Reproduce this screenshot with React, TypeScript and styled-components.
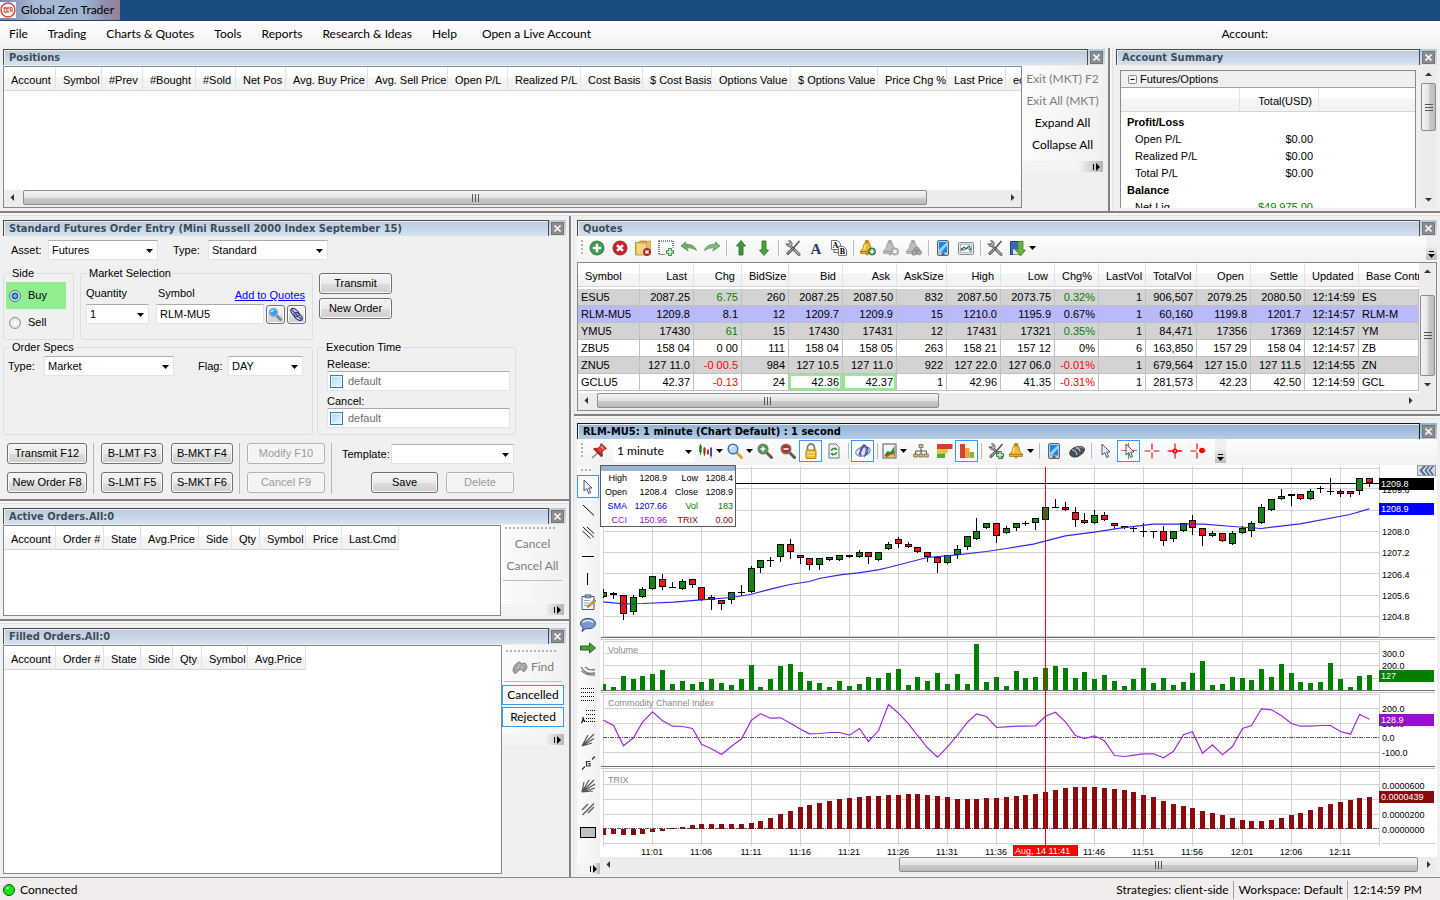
import React from "react";
import styled, { createGlobalStyle, css } from "styled-components";

const SANS = `"Liberation Sans", Arial, sans-serif`;
const UI = `Lato, "Segoe UI", sans-serif`;
const TITLE = `"DejaVu Sans Condensed", Tahoma, "DejaVu Sans", sans-serif`;

const GlobalStyle = createGlobalStyle`
  *, *::before, *::after { box-sizing: border-box; }
  body { margin: 0; background: #f0f0f0; color: #000; font: 11px/13px ${SANS}; }
  button, input, select { font: inherit; color: inherit; margin: 0; }
  svg { display: block; flex: none; }
`;

/* ---------- shell ---------- */

const Shell = styled.div`
  display: grid;
  grid-template-rows: 21px 27px 163px 5px 1fr 24px;
  grid-template-columns: minmax(0, 1fr);
  min-height: 100vh;
  background: #f0f0f0;
  overflow: hidden;
`;

const TitleBar = styled.header`
  display: flex;
  background: #1a4b80;
  border-bottom: 1px solid #24466e;
`;

const AppName = styled.h1`
  display: flex;
  align-items: center;
  gap: 5px;
  width: 120px;
  margin: 0;
  font: 12px/20px ${UI};
  white-space: nowrap;
  background: linear-gradient(90deg, #7288ad, #a9bbd6 30%, #9fb4d2 70%, #8c8fae 88%, #9a7e93);
`;

const MenuBar = styled.nav`
  display: flex;
  align-items: center;
  gap: 20px;
  padding: 0 172px 2px 9px;
  background: linear-gradient(#fdfdfd, #f2f2f2);
  font: 12px/16px ${UI};
  white-space: nowrap;
`;

const MenuItem = styled.button<{ $gap?: boolean }>`
  padding: 0;
  border: 0;
  background: none;
  margin-left: ${(p) => (p.$gap ? "5px" : "0")};
`;

const AccountLabel = styled.span`
  margin-left: auto;
`;

const TopRow = styled.div`
  display: grid;
  grid-template-columns: minmax(0, 1fr) 5px 327px;
  min-height: 0;
`;

const MainRow = styled.div`
  display: grid;
  grid-template-columns: 569px 5px minmax(0, 1fr);
  min-height: 0;
`;

const HSplit = styled.div`
  flex: none;
  height: 5px;
  background: #f6f6f6;
  border-top: 2px solid #828282;
  border-bottom: 1px solid #e2e2e2;
`;

const VSplit = styled.div`
  background: #f6f6f6;
  border-left: 2px solid #828282;
  border-right: 1px solid #e2e2e2;
`;

const Column = styled.div`
  display: flex;
  flex-direction: column;
  min-width: 0;
`;

const Panel = styled.section<{ $grow?: boolean; $h?: number; $top?: number }>`
  display: flex;
  flex-direction: column;
  min-width: 0;
  flex: ${(p) => (p.$grow ? "1" : "none")};
  ${(p) => p.$h && css`height: ${p.$h}px;`}
  padding: ${(p) => p.$top ?? 4}px 3px 3px;
`;

const Caption = styled.div<{ $active?: boolean }>`
  display: flex;
  flex: none;
  height: 16px;
  background: ${(p) => (p.$active ? "linear-gradient(#92b0d0, #b4cde8)" : "linear-gradient(#b7c8d9, #d6e2f0)")};
`;

const CaptionText = styled.h2<{ $active?: boolean }>`
  flex: 1;
  margin: 0;
  padding-left: 5px;
  border: 1px solid ${(p) => (p.$active ? "#1c1c1c" : "#4a4a4a")};
  border-bottom: 0;
  box-shadow: inset 1px 1px 0 #eaf0f7;
  font: bold 11px/15px ${TITLE};
  color: ${(p) => (p.$active ? "#000" : "#3e4b57")};
  white-space: nowrap;
  overflow: hidden;
`;

const CloseButton = styled.button`
  display: grid;
  place-items: center;
  width: 17px;
  height: 16px;
  padding: 0;
  border: 0;
  background: none;
`;

const Body = styled.div`
  display: flex;
  flex: 1;
  min-height: 0;
  margin-top: 1px;
`;

const Well = styled.div`
  display: flex;
  flex-direction: column;
  flex: 1;
  min-width: 0;
  border: 1px solid #828790;
  background: #fff;
  overflow: hidden;
`;

/* ---------- scroll bars ---------- */

const HBar = styled.div`
  display: flex;
  flex: none;
  align-items: flex-start;
  height: 17px;
  background: #ececec;
`;

const ArrowButton = styled.button<{ $tall?: boolean }>`
  display: grid;
  place-items: center;
  flex: none;
  width: 19px;
  height: ${(p) => (p.$tall ? "17px" : "15px")};
  padding: 0;
  border: 0;
  background: transparent;
`;

const thumb = css`
  display: grid;
  place-items: center;
  border: 1px solid #8d8d8d;
  border-radius: 2px;
`;

const HThumb = styled.div<{ $flex: number }>`
  ${thumb}
  flex: ${(p) => p.$flex};
  height: 15px;
  background: linear-gradient(#f4f4f4, #e4e4e4 50%, #cdcdcf 51%, #bcbcc0);
`;

const Track = styled.div<{ $flex: number }>`
  flex: ${(p) => p.$flex};
`;

const Corner = styled.div`
  flex: none;
  width: 17px;
`;

const VBar = styled.div`
  display: flex;
  flex: none;
  flex-direction: column;
  align-items: center;
  width: 17px;
  background: #ececec;
`;

const VThumb = styled.div<{ $flex: number }>`
  ${thumb}
  flex: ${(p) => p.$flex};
  width: 15px;
  background: linear-gradient(90deg, #f4f4f4, #e4e4e4 50%, #cdcdcf 51%, #bcbcc0);
`;

/* ---------- tables ---------- */

const Grid = styled.table`
  width: 100%;
  table-layout: fixed;
  border-collapse: separate;
  border-spacing: 0;
`;

const Th = styled.th<{ $right?: boolean }>`
  height: 24px;
  padding: 4px 6px 0 7px;
  font-weight: normal;
  text-align: ${(p) => (p.$right ? "right" : "left")};
  white-space: nowrap;
  overflow: hidden;
  background: linear-gradient(#fff 45%, #f4f5f6 46%, #f1f2f4);
  border-right: 1px solid #e0e3e6;
  border-bottom: 1px solid #d5d5d5;
  &:last-child { padding-right: 0; border-right: 0; }
`;

const QuoteRow = styled.tr<{ $bg: string }>`
  background: ${(p) => p.$bg};
`;

const Td = styled.td<{ $color?: string; $left?: boolean; $flash?: boolean }>`
  height: 17px;
  padding: 0 3px;
  font-size: 11px;
  line-height: 15px;
  text-align: ${(p) => (p.$left ? "left" : "right")};
  white-space: nowrap;
  overflow: hidden;
  color: ${(p) => p.$color ?? "#000"};
  border-right: 1px solid #c0c0c0;
  border-bottom: 1px solid #c0c0c0;
  ${(p) => p.$flash && css`box-shadow: inset 0 0 0 2px #90ee90;`}
`;

/* ---------- tool strips ---------- */

const SideStrip = styled.div<{ $w: number; $top?: number }>`
  display: flex;
  flex-direction: column;
  align-self: flex-start;
  flex: none;
  width: ${(p) => p.$w}px;
  margin-right: 2px;
  padding-top: ${(p) => p.$top ?? 0}px;
  font: 12px/16px ${UI};
  background: linear-gradient(90deg, #fbfbfb, #f1f1f1);
`;

const StripButton = styled.button<{ $boxed?: boolean }>`
  display: flex;
  align-items: center;
  justify-content: center;
  gap: 3px;
  width: 100%;
  height: ${(p) => (p.$boxed ? "20px" : "22px")};
  margin-bottom: ${(p) => (p.$boxed ? "2px" : "0")};
  padding: 0;
  white-space: nowrap;
  border: ${(p) => (p.$boxed ? "1px solid #3399ff" : "0")};
  background: ${(p) => (p.$boxed ? "#fbfbfb" : "none")};
  &:disabled { color: #7d7d7d; }
`;

const StripRule = styled.hr`
  width: calc(100% - 4px);
  margin: 3px 2px;
  border: 0;
  border-top: 1px solid #bdbdbd;
`;

const Grip = styled.div<{ $vertical?: boolean }>`
  flex: none;
  ${(p) =>
    p.$vertical
      ? css`width: 2px; height: 16px; margin-right: 2px; background: repeating-linear-gradient(#b4b4b4 0 2px, transparent 2px 4px);`
      : css`width: 52px; height: 2px; margin: 2px auto 4px 4px; background: repeating-linear-gradient(90deg, #b4b4b4 0 2px, transparent 2px 4px);`}
`;

const StripEnd = styled.div<{ $gap?: number }>`
  display: flex;
  justify-content: flex-end;
  margin-top: ${(p) => p.$gap ?? 0}px;
  height: 11px;
  background: linear-gradient(90deg, #f4f4f4 70%, #b5b5b5);
`;

const ToolBar = styled.div`
  display: flex;
  align-items: center;
  flex: none;
  height: 26px;
  padding: 0 0 2px 4px;
  background: linear-gradient(#fdfdfd, #f2f2f2);
`;

const Tool = styled.button<{ $on?: boolean; $w?: number }>`
  display: grid;
  place-items: center;
  flex: none;
  width: ${(p) => p.$w ?? 23}px;
  height: 22px;
  padding: 0;
  border: ${(p) => (p.$on ? "1px solid #3399ff" : "0")};
  background: ${(p) => (p.$on ? "#fdfdfd" : "none")};
`;

const ToolRule = styled.span`
  flex: none;
  width: 1px;
  height: 16px;
  margin: 0 2px 0 3px;
  background: #bdbdbd;
`;

const ToolEnd = styled.button<{ $push?: boolean }>`
  display: grid;
  place-items: end center;
  flex: none;
  width: 11px;
  height: 24px;
  padding: 0 0 2px;
  border: 0;
  margin-left: ${(p) => (p.$push ? "auto" : "6px")};
  background: linear-gradient(#f0f0f0 40%, #bcbcbc);
`;

/* ---------- order form ---------- */

const Form = styled.form`
  display: flex;
  flex-direction: column;
  padding-top: 3px;
  height: 259px;
`;

const Line = styled.div<{ $mt?: number; $pl?: number; $gap?: number }>`
  display: flex;
  align-items: flex-start;
  margin-top: ${(p) => p.$mt ?? 0}px;
  padding-left: ${(p) => p.$pl ?? 0}px;
  gap: ${(p) => p.$gap ?? 0}px;
`;

const Label = styled.label<{ $w?: number; $ml?: number }>`
  flex: none;
  width: ${(p) => (p.$w ? `${p.$w}px` : "auto")};
  margin-left: ${(p) => p.$ml ?? 0}px;
  line-height: 20px;
  white-space: nowrap;
`;

const PickWrap = styled.span<{ $w: number }>`
  position: relative;
  flex: none;
  width: ${(p) => p.$w}px;
  height: 20px;
  svg { position: absolute; right: 5px; top: 9px; pointer-events: none; }
`;

const field = css`
  height: 20px;
  padding: 0 3px;
  border: 1px solid #e2e3ea;
  border-top-color: #abadb3;
  border-radius: 0;
  background: #fff;
  outline: none;
`;

const Pick = styled.select`
  ${field}
  width: 100%;
  appearance: none;
`;

const TextBox = styled.input`
  ${field}
  width: 108px;
`;

const Group = styled.fieldset<{ $w: number; $h: number }>`
  flex: none;
  width: ${(p) => p.$w}px;
  height: ${(p) => p.$h}px;
  min-width: 0;
  margin: 0;
  padding: 0;
  border: 1px solid #d5dfe5;
  border-radius: 3px;
`;

const GroupBody = styled.div<{ $pad: string }>`
  padding: ${(p) => p.$pad};
`;

const Legend = styled.legend`
  margin-left: 6px;
  padding: 0 2px;
  line-height: 12px;
`;

const SideOption = styled.label<{ $on?: boolean }>`
  display: flex;
  align-items: center;
  gap: 7px;
  width: 60px;
  height: 27px;
  padding-left: 3px;
  background: ${(p) => (p.$on ? "#90ee90" : "transparent")};
`;

const Radio = styled.input`
  appearance: none;
  width: 12px;
  height: 12px;
  border: 1px solid #8e8f8f;
  border-radius: 50%;
  background: radial-gradient(#fff, #d8d8d8);
  &:checked {
    border-color: #4a6a80;
    background: radial-gradient(circle, #5cc2ec 0 1px, #0f4d7c 3px, #e8f0f6 4px);
  }
`;

const Check = styled.input`
  appearance: none;
  flex: none;
  width: 13px;
  height: 13px;
  border: 1px solid #3f7da6;
  background: linear-gradient(135deg, #a9dcf7, #e6f6fe);
  box-shadow: inset 0 0 0 1px #e8f6fd;
`;

const DateField = styled.label`
  ${field}
  display: flex;
  align-items: center;
  gap: 5px;
  width: 183px;
  padding: 0 2px;
  color: #6d6d6d;
`;

const Small = styled.span<{ $mt?: number }>`
  display: block;
  margin-top: ${(p) => p.$mt ?? 0}px;
  line-height: 14px;
`;

const Push = styled.button<{ $w: number }>`
  display: grid;
  place-items: center;
  flex: none;
  width: ${(p) => p.$w}px;
  height: 21px;
  padding: 0;
  border: 1px solid #707070;
  border-radius: 3px;
  white-space: nowrap;
  background: linear-gradient(#f3f3f3, #ebebeb 50%, #dddddd 51%, #cfcfcf);
  box-shadow: inset 0 0 0 1px #fafafa;
  &:disabled {
    color: #9a9a9a;
    border-color: #adb2b5;
    background: #f4f4f4;
  }
`;

const Square = styled(Push)`
  height: 19px;
  margin: 1px 0 0 2px;
`;

const Stack = styled.div<{ $gap: number; $mt?: number }>`
  display: flex;
  flex-direction: column;
  align-items: flex-end;
  gap: ${(p) => p.$gap}px;
  margin-top: ${(p) => p.$mt ?? 0}px;
`;

const VRule = styled.span`
  width: 1px;
  height: 51px;
  margin: 0 7px 0 6px;
  background: #b8b8b8;
`;

const Link = styled.a`
  margin-left: auto;
  color: #0000ff;
  line-height: 17px;
`;

/* ---------- account summary ---------- */

const Summary = styled.div`
  flex: 1;
  min-width: 0;
  height: 138px;
  margin: 4px 4px 0;
  border: 1px solid #8a8a8a;
  border-bottom: 0;
  background: #fff;
  overflow: hidden;
`;

const SummaryHead = styled.h3`
  display: flex;
  align-items: center;
  gap: 3px;
  height: 17px;
  margin: 0;
  padding-left: 7px;
  font: 11px/13px ${SANS};
  background: #f0f0f0;
  border-bottom: 1px solid #a0a0a0;
`;

const MoneyCell = styled.td<{ $bold?: boolean; $right?: boolean; $green?: boolean }>`
  height: 17px;
  padding: ${(p) => (p.$right ? "0 6px 0 0" : p.$bold ? "0 0 0 6px" : "0 0 0 14px")};
  font-weight: ${(p) => (p.$bold ? "bold" : "normal")};
  text-align: ${(p) => (p.$right ? "right" : "left")};
  color: ${(p) => (p.$green ? "#008000" : "#000")};
`;

/* ---------- chart ---------- */

const ChartRow = styled.div`
  display: flex;
  flex: 1;
  min-height: 0;
`;

const Palette = styled.div`
  display: flex;
  flex-direction: column;
  flex: none;
  width: 23px;
  padding-top: 4px;
  background: linear-gradient(90deg, #fbfbfb, #f1f1f1);
`;

const PaletteGrip = styled.div`
  width: 10px;
  height: 2px;
  margin: 0 0 4px 4px;
  background: repeating-linear-gradient(90deg, #b4b4b4 0 2px, transparent 2px 4px);
`;

const PaletteEnd = styled(StripEnd)`
  margin-top: auto;
`;

const ChartArea = styled.div`
  position: relative;
  display: flex;
  flex-direction: column;
  flex: 1;
  min-width: 0;
  background: #fff;
`;

const ChartSvg = styled.svg`
  width: 100%;
  height: auto;
  font: 9px ${SANS};
`;

const DataWindow = styled.div`
  position: absolute;
  left: 0;
  top: 0;
  width: 136px;
  height: 62px;
  border: 1px solid #5a5a5a;
  background: #fff;
  &::before { content: ""; display: block; height: 5px; background: #99b4d1; }
`;

const DataTable = styled.table`
  width: 132px;
  border-spacing: 0;
  table-layout: fixed;
  font: 9px/14px ${SANS};
`;

const DataCell = styled.td<{ $c?: string }>`
  padding: 0;
  text-align: right;
  color: ${(p) => p.$c ?? "#000"};
`;

const Collapse = styled.button`
  position: absolute;
  right: 1px;
  top: 0;
  width: 19px;
  height: 11px;
  padding: 0;
  border: 1px solid #9a9a9a;
  background: #d8d8d8;
`;

const IntervalWrap = styled(PickWrap)`
  height: 22px;
  svg { top: 10px; right: 3px; }
`;

const Interval = styled.select`
  appearance: none;
  width: 100%;
  height: 22px;
  padding: 0 0 0 4px;
  border: 0;
  background: #fff;
  font: 12px/16px ${UI};
`;

/* ---------- status bar ---------- */

const StatusBar = styled.footer`
  display: flex;
  align-items: center;
  padding: 0 18px 0 3px;
  border-top: 1px solid #8c8c8c;
  background: #f1edec;
  font: 12px/18px ${UI};
  white-space: nowrap;
`;

const StatusText = styled.span<{ $first?: boolean; $rule?: boolean }>`
  margin-left: ${(p) => (p.$first ? "auto" : "4px")};
  padding-left: ${(p) => (p.$rule ? "5px" : "0")};
  border-left: ${(p) => (p.$rule ? "1px solid #a0a0a0" : "0")};
`;

const Connected = styled.span`
  margin-left: 5px;
`;

/* ---------- icons ---------- */

const Ic = ({ children, w = 16, h = 16 }: { children: React.ReactNode; w?: number; h?: number }) => (
  <svg width={w} height={h} viewBox={`0 0 ${w} ${h}`} aria-hidden="true">{children}</svg>
);

const Caret = () => <Ic w={7} h={4}><path d="M0 0h7L3.500 4z" /></Ic>;

const CloseX = () => (
  <Ic w={13} h={13}>
    <rect x=".5" y=".5" width="12" height="12" fill="#8d8d8d" stroke="#747474" />
    <path d="M3.500 3.500l6 6M9.500 3.500l-6 6" stroke="#fff" strokeWidth="1.600" />
  </Ic>
);

const EndMark = () => (
  <Ic w={14} h={11}><path d="M4.500 3v6" stroke="#000" /><path d="M7 2v8l4-4z" /></Ic>
);

const DownMark = () => <Ic w={7} h={8}><path d="M1 1.500h5" stroke="#000" /><path d="M0 4h7L3.500 8z" /></Ic>;

const Wrench = () => (
  <>
    <path d="M4 4.500L14 14.500" stroke="#555a5e" strokeWidth="3" strokeLinecap="round" />
    <path d="M4 4.500L14 14.500" stroke="#a9aeb2" strokeWidth="1.400" strokeLinecap="round" />
    <path d="M1 3.500c.300 2.500 2.500 3.500 4.500 2.500l1.500-1.500C7.500 2 6 .500 3.500.800L5.300 2.600 3 4.800z" fill="#b8bcc0" stroke="#555a5e" strokeWidth=".9" />
    <path d="M14.500 1L8 8.500" stroke="#4c5154" strokeWidth="1.500" />
    <path d="M7.500 7.500l-6 5.500 1.500 2L9 9z" fill="#8d9296" stroke="#444" strokeWidth=".8" />
  </>
);

const Bell = ({ gray }: { gray?: boolean }) => {
  const f = gray ? "#bdbdbd" : "#f0b62c";
  const s = gray ? "#9b9b9b" : "#a8700e";
  return (
    <g stroke={s} strokeWidth=".8" fill={f}>
      <path d="M5.300 3V1.500a1.700 1.300 0 0 1 3.400 0V3z" fill={gray ? "#aaa" : "#c88a1c"} />
      <path d="M7 2.300c3 0 3.300 3 3.800 5.200.400 2 2.700 2.500 2.700 4H.500c0-1.500 2.300-2 2.700-4C3.700 5.300 4 2.300 7 2.300z" />
      <path d="M.500 11.500h13v1.900H.500z" />
      <path d="M5.500 13.500h3l-1.500 2z" />
      {!gray && <path d="M5.500 4.500c-.800 1.500-1 3-1.500 5" stroke="#ffe9a0" strokeWidth="1.400" fill="none" />}
    </g>
  );
};

const Plus = ({ x, y, r = 4 }: { x: number; y: number; r?: number }) => (
  <g>
    <circle cx={x} cy={y} r={r} fill="#3f9b52" stroke="#206a30" strokeWidth=".8" />
    <path d={`M${x - r * 0.6} ${y}h${r * 1.2}M${x} ${y - r * 0.6}v${r * 1.2}`} stroke="#fff" strokeWidth={r > 5 ? 2.4 : 1.5} />
  </g>
);

const Cross = ({ x, y, r = 4, gray }: { x: number; y: number; r?: number; gray?: boolean }) => {
  const d = r * 0.42;
  return (
    <g>
      <circle cx={x} cy={y} r={r} fill={gray ? "#b4b4b4" : "#c9252b"} stroke={gray ? "#999" : "#8a1216"} strokeWidth=".8" />
      <path d={`M${x - d} ${y - d}l${2 * d} ${2 * d}M${x + d} ${y - d}l${-2 * d} ${2 * d}`} stroke="#fff" strokeWidth={r > 5 ? 2.6 : 1.4} />
    </g>
  );
};

const Lens = ({ sign }: { sign?: "plus" | "minus" }) => {
  const c = sign === "plus" ? "#4c9a4c" : sign === "minus" ? "#c62828" : "#b9d8f2";
  return (
    <Ic>
      <path d="M10 10l4.500 4.500" stroke={sign ? "#5a5a5a" : "#d9a441"} strokeWidth="3" strokeLinecap="round" />
      <circle cx="6" cy="6" r="4.800" fill={c} stroke={sign ? "#6f7f74" : "#3f6fae"} strokeWidth="1.500" />
      {!sign && <path d="M3.500 5.500a3 3 0 0 1 3-2.500" stroke="#fff" strokeWidth="1.400" fill="none" />}
      {sign && <path d="M3.500 6h5" stroke="#fff" strokeWidth="1.600" />}
      {sign === "plus" && <path d="M6 3.500v5" stroke="#fff" strokeWidth="1.600" />}
    </Ic>
  );
};

const Phone = () => (
  <Ic>
    <rect x="2.500" y=".500" width="11" height="15" rx="1.500" fill="#c3ccd6" stroke="#59636e" />
    <rect x="4" y="2" width="8" height="10.500" fill="#1487e8" />
    <path d="M4 9.500L12 2v3.500L6 12.500H4z" fill="#8ed2ff" />
    <path d="M6.500 14h3" stroke="#333" strokeWidth="1.400" />
  </Ic>
);

const Pointer = ({ x = 0 }: { x?: number }) => (
  <path d={`M${x + 4} 1v11l2.700-2.400 2 4.900 2-.900-2-4.600h3.300z`} fill="#eef2f7" stroke="#44546c" strokeWidth="1" />
);

const RedCross = ({ cx = 8, dot }: { cx?: number; dot?: "center" | "right" }) => (
  <Ic>
    <path d={`M${cx} .5v6M${cx} 9.500v6M.5 8h6M9.500 8h6`} stroke="#ff0000" strokeWidth="1.200" />
    {dot === "center" && <><path d="M2 8h12" stroke="#f00" /><circle cx="8" cy="8" r="2.600" fill="#f00" /><circle cx="8" cy="8" r=".8" fill="#fff" /></>}
    {dot === "right" && <circle cx="12" cy="7.500" r="2.800" fill="#f00" />}
  </Ic>
);

const quoteTools: Record<string, React.ReactNode> = {
  "Add symbol": <Ic><Plus x={8} y={8} r={7} /></Ic>,
  "Delete symbol": <Ic><Cross x={8} y={8} r={7} /></Ic>,
  "Clear page": (
    <Ic>
      <path d="M.500 2.500h3L5 1h6v14H.500z" fill="#d9aa45" stroke="#a87a1c" strokeWidth=".7" />
      <path d="M1.500 3.500h10v11h-10z" fill="#f3d484" />
      <path d="M11.500 1h4v13h-4z" fill="#e9bf62" stroke="#b98a2a" strokeWidth=".6" />
      <Cross x={12} y={12} r={3.6} />
    </Ic>
  ),
  "Insert row": (
    <Ic>
      <rect x="1" y="1" width="14" height="13.500" fill="none" stroke="#222" strokeWidth="1.200" strokeDasharray="1 1" />
      <rect x="7.500" y="7.500" width="8.500" height="8.500" fill="#fbfbfb" />
      <path d="M12 8v8M8 12h8" stroke="#2c8a3d" strokeWidth="3.600" />
      <path d="M12 9v6M9 12h6" stroke="#e9f8ea" strokeWidth="1.600" />
    </Ic>
  ),
  Undo: <Ic><path d="M0 6l4.500-4V4.300C10 4 14 6 15.500 10.500 12.500 8 8.500 7.600 5.500 8l1.800 3z" fill="#6db56d" stroke="#3c8a3f" strokeWidth=".7" /></Ic>,
  Redo: <Ic><path d="M16 6l-4.500-4V4.300C6 4 2 6 .500 10.500 3.500 8 7.500 7.600 10.500 8l-1.800 3z" fill="#7dba7d" stroke="#3c8a3f" strokeWidth=".7" /></Ic>,
  "Move up": <Ic><path d="M8 .5l4.500 5.500H10v9H6V6H3.500z" fill="#3f9a35" stroke="#226a1c" strokeWidth=".8" /></Ic>,
  "Move down": <Ic><path d="M8 15.500L3.500 10H6V1h4v9h2.500z" fill="#4ba53f" stroke="#226a1c" strokeWidth=".8" /></Ic>,
  Settings: <Ic><Wrench /></Ic>,
  Font: <Ic><text x="8" y="13.500" textAnchor="middle" fontFamily="Liberation Serif" fontWeight="bold" fontSize="15" fill="#20406c">A</text></Ic>,
  "Text size": (
    <Ic>
      <path d="M.500.500h6l3 3v6h-9z" fill="#fff" stroke="#777" />
      <text x="4.500" y="8" textAnchor="middle" fontFamily="Liberation Serif" fontWeight="bold" fontSize="8">A</text>
      <path d="M7.500 6.500h5l3 3v6h-8z" fill="#fff" stroke="#777" />
      <text x="11.500" y="14" textAnchor="middle" fontFamily="Liberation Serif" fontWeight="bold" fontSize="8">B</text>
      <path d="M3 10v2.500h4" stroke="#666" fill="none" />
    </Ic>
  ),
  "Add alert": <Ic><Bell /><Plus x={12} y={11.5} r={3.6} /></Ic>,
  "Remove alert": <Ic><Bell gray /><Cross x={12} y={11.5} r={3.6} gray /></Ic>,
  "Find alert": <Ic><Bell gray /><g fill="#a5a5a5" stroke="#7c7c7c" strokeWidth=".7"><circle cx="8.500" cy="12.500" r="2.500" /><circle cx="13.200" cy="12.500" r="2.300" /><path d="M8 10l1-2.500h3.500l1 2.500z" /></g></Ic>,
  Mobile: <Phone />,
  "Open chart": (
    <Ic>
      <rect x=".5" y="2.500" width="15" height="12" rx="1" fill="#e2e6ea" stroke="#868c92" />
      <rect x="2.500" y="4.500" width="11" height="8" fill="#fff" stroke="#99a" strokeWidth=".6" />
      <path d="M3 10l3-3 2 2 3-3 2.500 4" stroke="#297a3a" strokeWidth="1.200" fill="none" />
      <path d="M3 8l3 2.500 3-3 2 2 2-.500" stroke="#284f9f" fill="none" />
      <path d="M3 11l2-2M11 10.500l2 1" stroke="#c33" />
    </Ic>
  ),
  Customize: <Ic><Wrench /></Ic>,
  Save: (
    <Ic>
      <path d="M.5 1.500h11v13H.5z" fill="#3d66b5" stroke="#23407c" />
      <path d="M3 9.500h6v5H3z" fill="#dfe6f2" />
      <path d="M10.500 16L5.500 10H8V1.500h5V10h2.500z" fill="#69b23a" stroke="#3f8120" strokeWidth=".8" />
    </Ic>
  ),
};

const chartIcons = {
  pin: (
    <Ic>
      <path d="M1 15l5.500-5" stroke="#777" strokeWidth="1.200" />
      <path d="M10 .500l5.500 5-2 1L11 9l.300 4L3 5.500l4-.200L9.500 3z" fill="#dd3b3b" stroke="#8f1b1b" strokeWidth=".9" />
      <path d="M3 5.500l8 8" stroke="#a32020" strokeWidth="2" />
      <path d="M10 3.500l2.500 2.500" stroke="#f6a0a0" strokeWidth="1.200" />
    </Ic>
  ),
  candles: <Ic w={13}><path d="M1.500 1v11M5.500 4v9M9 6v6M12 4v11" stroke="#444" strokeWidth=".8" /><path d="M1.500 2.500v7" stroke="#0a8a0a" strokeWidth="2.400" /><path d="M5.500 5v6" stroke="#e01818" strokeWidth="2.200" /><path d="M9 7v4" stroke="#1a8a1a" strokeWidth="2" /><path d="M12 5v8" stroke="#7b2bb5" strokeWidth="2" /></Ic>,
  lock: <Ic><path d="M4.500 8V4.500a3.500 3.500 0 0 1 7 0V8" fill="none" stroke="#7d7d7d" strokeWidth="1.800" /><rect x="3" y="7" width="10" height="8.500" rx="1" fill="#f3bf33" stroke="#b57f10" /><path d="M4 9.500h8M4 12.500h8" stroke="#fbe08d" /></Ic>,
  refresh: <Ic><path d="M3 1h7l3 3v11H3z" fill="#eef1f5" stroke="#6b7680" /><path d="M5.500 8a2.500 2.500 0 0 1 4-2M10.500 9a2.500 2.500 0 0 1-4 2" stroke="#3c8a3c" strokeWidth="1.500" fill="none" /><path d="M9 4v3h3zM7 13v-3H4z" fill="#3c8a3c" /></Ic>,
  magnet: (
    <Ic>
      <g fill="none" stroke="#5560a8" strokeWidth="1">
        <ellipse cx="8" cy="8.500" rx="7.500" ry="4.500" transform="rotate(-15 8 8.500)" fill="#dfe2f2" stroke="#7d84c0" />
        <path d="M9 2C5.500 4 4.500 9 6 13.500M10 2c2 2.500 1.500 8-1 12M12 4c1.500 2 1 5-1 8" strokeWidth="1.400" />
        <path d="M4 12L9 2l2 3" stroke="#3e4890" strokeWidth="1.300" />
      </g>
    </Ic>
  ),
  theme: <Ic><rect x="1" y="1" width="13" height="14" fill="#f4f4f4" stroke="#555" /><path d="M2.500 12l3-4 3 1 4-6v10h-10z" fill="#2c8c36" /><path d="M2.500 14l4-3 3 1 3-4v6z" fill="#e0382b" /><path d="M5 14l3-2 4-1v3z" fill="#f3c332" /></Ic>,
  tree: <Ic><path d="M8 4v4M2.500 11V8h11v3M8 8v3" stroke="#555" fill="none" /><path d="M6 1.500h4v3H6zM.700 11h4v3h-4zM6 11h4v3H6zM11.300 11h4v3h-4z" fill="#e6bf4c" stroke="#666" strokeWidth=".8" /></Ic>,
  profile: <Ic><path d="M0 1h15.500v5H0z" fill="#d93a33" /><path d="M0 6h10.500v4.500H0z" fill="#ecc52f" /><path d="M0 10.500h8V15H0z" fill="#56a83a" /></Ic>,
  bars: <Ic><path d="M1 1h5v14H1z" fill="#d8402f" /><path d="M6 5h4.500v10H6z" fill="#efa43c" /><path d="M10.500 9H15v6h-4.500z" fill="#7fb849" /></Ic>,
  toolsPlus: <Ic><Wrench /><path d="M12 8v8M8 12h8" stroke="#2c8a3d" strokeWidth="3.400" /><path d="M12 9v6M9 12h6" stroke="#d9f2dc" strokeWidth="1.300" /></Ic>,
  mouse: (
    <Ic>
      <path d="M.700 10C1 6.500 5 4 9.500 3.500c3.500-.300 5.800.700 6 2.500.200 2.500-2.500 5.500-6.500 7.500-3.500 1.200-8.500.500-8.300-3.500z" fill="#4a4f57" stroke="#24282e" strokeWidth=".8" />
      <path d="M3 7c2 0 4.500 1.500 5 5M6.500 5c2-.200 4 1 4.500 3.500" stroke="#c4cad2" strokeWidth="1.200" fill="none" />
      <path d="M9 4.500c2.500-.500 4.500-.200 5.500 1" stroke="#9aa1aa" fill="none" />
    </Ic>
  ),
};

const palette: [string, React.ReactNode][] = [
  ["Pointer", <Ic><Pointer /></Ic>],
  ["Trend line", <Ic><path d="M3 3l11 10.500" stroke="#000" /></Ic>],
  ["Channel", <Ic><path d="M2.500 6l8 7.500M3 2l11 10.500M7 2l7 6.500" stroke="#000" strokeWidth=".9" /></Ic>],
  ["Horizontal line", <Ic><path d="M2 8.500h12" stroke="#000" /></Ic>],
  ["Vertical line", <Ic><path d="M7.500 2v12" stroke="#000" /></Ic>],
  ["Note", <Ic><path d="M2 2.500h12v13H2z" fill="#f3f6fb" stroke="#3f5a8a" /><path d="M5 .800h6v3H5z" fill="#8d97a5" stroke="#56606e" strokeWidth=".7" /><path d="M4 6.500h6M4 9h5M4 11.500h4" stroke="#8fa3c4" /><path d="M8 11.500l6.500-6 1.300 1.600-6.500 5.600-2 .600z" fill="#f0b42e" stroke="#7a5210" strokeWidth=".7" /></Ic>],
  ["Callout", <Ic><path d="M8 1.500c4.500 0 7.500 2 7.500 5s-3 5.200-7 5.200c-1 0-1.800 0-2.500-.200L2 14.500l1.200-4C1.500 9.700.5 8.200.5 6.500c0-3 3-5 7.500-5z" fill="#7d96d0" stroke="#2e4580" /><path d="M3 5.500c1.500-2.500 8-2.800 10 0" stroke="#dce6fa" strokeWidth="1.500" fill="none" /></Ic>],
  ["Arrow", <Ic><path d="M.5 6h9V3l6 5-6 5v-3h-9z" fill="#4aa02c" stroke="#2b5a3a" /></Ic>],
  ["Fibonacci arc", <Ic><path d="M1 4c2.500 4.500 7.500 7.500 14 6M1.500 8c3 2.500 8 4.500 13.500 4M5 4c2.500 2.500 6 3.500 10 2.500" stroke="#777" strokeWidth="1.300" fill="none" /></Ic>],
  ["Fibonacci retracement", <Ic><path d="M1 2.500h14M1 6.500h14M1 10.500h14M1 14.500h14" stroke="#000" strokeDasharray="1 1" shapeRendering="crispEdges" /></Ic>],
  ["Fibonacci extension", <Ic><path d="M6 1.500h9M6 5.500h9M6 9.500h9M6 12.500h9" stroke="#000" strokeDasharray="1 1" shapeRendering="crispEdges" /><path d="M1.500 14l1.500-3v-3M3 9.500l2 3.500" stroke="#000" fill="none" strokeWidth="1.200" /></Ic>],
  ["Speed lines", <Ic><path d="M2 14L8 3M2 14L14 2M2 14l12-7.500M2 14l10-3" stroke="#555" strokeWidth="1.200" /></Ic>],
  ["Gann line", <Ic><path d="M2 14.500l3-3M12 4.500l3-3M10.500 6.500h-4v4.500h3.500V8.500H8" stroke="#333" strokeWidth="1.200" fill="none" /></Ic>],
  ["Gann fan", <Ic><path d="M2 14L4 4M2 14L9 2M2 14L14 2M2 14l13-8M2 14l13-4M2 14l11-1" stroke="#555" strokeWidth="1.200" /></Ic>],
  ["Pitchfork", <Ic><path d="M2 9l6-6M2.500 14L14 2.500M8 12l6-6" stroke="#666" strokeWidth="1.500" /></Ic>],
  ["Rectangle", <Ic><rect x=".5" y="3.500" width="15" height="10" fill="#c0c0c0" stroke="#000" /></Ic>],
];

/* ---------- shared pieces ---------- */

const Dir = ({ d }: { d: "l" | "r" | "u" | "d" }) => {
  const p = { l: "M5 1v7L1.500 4.500z", r: "M4 1v7l3.500-3.500z", u: "M1 6h7L4.500 2.500z", d: "M1 3h7L4.500 6.500z" }[d];
  return <Ic w={9} h={9}><path d={p} fill="#333" /></Ic>;
};

const HScroll = ({ before = 0, size, after = 0, corner }: { before?: number; size: number; after?: number; corner?: boolean }) => (
  <HBar>
    <ArrowButton type="button" aria-label="Scroll left"><Dir d="l" /></ArrowButton>
    {before > 0 && <Track $flex={before} />}
    <HThumb $flex={size}><Ic w={9} h={8}><path d="M1.500 0v8M4.500 0v8M7.500 0v8" stroke="#555" /></Ic></HThumb>
    {after > 0 && <Track $flex={after} />}
    <ArrowButton type="button" aria-label="Scroll right"><Dir d="r" /></ArrowButton>
    {corner && <Corner />}
  </HBar>
);

const VScroll = ({ before = 0, size, after = 0 }: { before?: number; size: number; after?: number }) => (
  <VBar>
    <ArrowButton $tall type="button" aria-label="Scroll up"><Dir d="u" /></ArrowButton>
    {before > 0 && <Track $flex={before} />}
    <VThumb $flex={size}><Ic w={8} h={9}><path d="M0 1.500h8M0 4.500h8M0 7.500h8" stroke="#555" /></Ic></VThumb>
    {after > 0 && <Track $flex={after} />}
    <ArrowButton $tall type="button" aria-label="Scroll down"><Dir d="d" /></ArrowButton>
  </VBar>
);

const Title = ({ text, active }: { text: string; active?: boolean }) => (
  <Caption $active={active}>
    <CaptionText $active={active}>{text}</CaptionText>
    <CloseButton type="button" aria-label={`Close ${text}`}><CloseX /></CloseButton>
  </Caption>
);

type Col = [string, number?];

const HeaderGrid = ({ cols, filler }: { cols: Col[]; filler?: boolean }) => (
  <Grid>
    <colgroup>
      {cols.map(([n, w]) => <col key={n} width={w} />)}
      {filler && <col />}
    </colgroup>
    <thead>
      <tr>
        {cols.map(([n]) => <Th key={n}>{n}</Th>)}
        {filler && <Blank />}
      </tr>
    </thead>
  </Grid>
);

const Blank = styled.td`
  padding: 0;
`;

const Choice = ({ id, value, w }: { id: string; value: string; w: number }) => (
  <PickWrap $w={w}>
    <Pick id={id} defaultValue={value}><option>{value}</option></Pick>
    <Caret />
  </PickWrap>
);

/* ---------- panels ---------- */

const positionCols: Col[] = [
  ["Account", 52], ["Symbol", 46], ["#Prev", 41], ["#Bought", 53], ["#Sold", 40], ["Net Pos", 50],
  ["Avg. Buy Price", 82], ["Avg. Sell Price", 80], ["Open P/L", 60], ["Realized P/L", 73], ["Cost Basis", 62],
  ["$ Cost Basis", 69], ["Options Value", 79], ["$ Options Value", 87], ["Price Chg %", 69], ["Last Price", 59], ["ection"],
];

const Positions = () => (
  <Panel $top={1}>
    <Title text="Positions" />
    <Body>
      <Well>
        <HeaderGrid cols={positionCols} />
        <Track $flex={1} />
        <HScroll size={904} after={75} />
      </Well>
      <SideStrip $w={81} $top={2}>
        <StripButton type="button" disabled>Exit (MKT) F2</StripButton>
        <StripButton type="button" disabled>Exit All (MKT)</StripButton>
        <StripButton type="button">Expand All</StripButton>
        <StripButton type="button">Collapse All</StripButton>
        <StripEnd $gap={5}><EndMark /></StripEnd>
      </SideStrip>
    </Body>
  </Panel>
);

const AccountSummary = () => (
  <Panel $top={1}>
    <Title text="Account Summary" />
    <Body>
      <Summary>
        <SummaryHead>
          <Ic w={9} h={9}><rect x=".5" y=".5" width="8" height="8" rx="1" fill="#f4f4ee" stroke="#7d8b8b" /><path d="M2.500 4.500h4" stroke="#000" /></Ic>
          Futures/Options
        </SummaryHead>
        <Grid>
          <colgroup><col width={119} /><col width={79} /><col /></colgroup>
          <thead><tr><Th /><Th $right>Total(USD)</Th><Th /></tr></thead>
          <TableGap>
            <tr><MoneyCell $bold colSpan={3}>Profit/Loss</MoneyCell></tr>
            {["Open P/L", "Realized P/L", "Total P/L"].map((n) => (
              <tr key={n}><MoneyCell>{n}</MoneyCell><MoneyCell $right>$0.00</MoneyCell><Blank /></tr>
            ))}
            <tr><MoneyCell $bold colSpan={3}>Balance</MoneyCell></tr>
            <tr><MoneyCell>Net Liq</MoneyCell><MoneyCell $right $green>$49,975.00</MoneyCell><Blank /></tr>
          </TableGap>
        </Grid>
      </Summary>
      <VScroll size={46} after={60} />
    </Body>
  </Panel>
);

const OrderEntry = () => (
  <Panel $h={283}>
    <Title text="Standard Futures Order Entry (Mini Russell 2000 Index September 15)" />
    <Form onSubmit={(e) => e.preventDefault()}>
      <Line $mt={1} $pl={8}>
        <Label htmlFor="asset" $w={37}>Asset:</Label>
        <Choice id="asset" value="Futures" w={110} />
        <Label htmlFor="kind" $ml={15} $w={35}>Type:</Label>
        <Choice id="kind" value="Standard" w={120} />
      </Line>
      <Line $mt={7} $gap={6}>
        <Group $w={71} $h={73}>
          <Legend>Side</Legend>
          <GroupBody $pad="3px 0 0 2px">
            <SideOption $on><Radio type="radio" name="side" defaultChecked />Buy</SideOption>
            <SideOption><Radio type="radio" name="side" />Sell</SideOption>
          </GroupBody>
        </Group>
        <Group $w={233} $h={73}>
          <Legend>Market Selection</Legend>
          <GroupBody $pad="8px 7px 0 5px">
            <Line>
              <QtyHead htmlFor="qty">Quantity</QtyHead>
              <QtyHead htmlFor="symbol">Symbol</QtyHead>
              <Link href="#quotes">Add to Quotes</Link>
            </Line>
            <Line>
              <Choice id="qty" value="1" w={63} />
              <Gap />
              <TextBox id="symbol" defaultValue="RLM-MU5" />
              <Square $w={19} type="button" aria-label="Find symbol">
                <Ic w={15} h={15}><path d="M8.500 8.500l5 5" stroke="#7c8794" strokeWidth="3" /><circle cx="5.500" cy="5.500" r="4" fill="#37a3ea" stroke="#8fb0d0" strokeWidth="1.500" /><path d="M3.500 5a2 2 0 0 1 2-1.700" stroke="#fff" strokeWidth="1.300" fill="none" /></Ic>
              </Square>
              <Square $w={19} type="button" aria-label="Link symbol">
                <Ic w={15} h={15}><g fill="none" stroke="#28347e" strokeWidth="1.100"><ellipse cx="6" cy="5.500" rx="2.800" ry="5" transform="rotate(-50 6 5.500)" /><ellipse cx="9" cy="9.500" rx="2.800" ry="5" transform="rotate(-50 9 9.500)" /><path d="M2 2l11 11" stroke="#4a55a0" strokeWidth="1.600" /></g></Ic>
              </Square>
            </Line>
          </GroupBody>
        </Group>
        <Stack $gap={4} $mt={6}>
          <Push $w={73} type="submit">Transmit</Push>
          <Push $w={73} type="button">New Order</Push>
        </Stack>
      </Line>
      <Line $mt={1} $gap={4}>
        <Group $w={310} $h={94}>
          <Legend>Order Specs</Legend>
          <GroupBody $pad="3px 0 0 4px">
            <Line>
              <Label htmlFor="otype" $w={36}>Type:</Label>
              <Choice id="otype" value="Market" w={130} />
              <Label htmlFor="flag" $ml={24} $w={30}>Flag:</Label>
              <Choice id="flag" value="DAY" w={75} />
            </Line>
          </GroupBody>
        </Group>
        <Group $w={199} $h={94}>
          <Legend>Execution Time</Legend>
          <GroupBody $pad="4px 0 0 9px">
            <Small>Release:</Small>
            <DateField><Check type="checkbox" aria-label="Release" />default</DateField>
            <Small $mt={3}>Cancel:</Small>
            <DateField><Check type="checkbox" aria-label="Cancel" />default</DateField>
          </GroupBody>
        </Group>
      </Line>
      <Line $mt={8} $pl={4}>
        <Stack $gap={8}><Push $w={80} type="button">Transmit F12</Push><Push $w={80} type="button">New Order F8</Push></Stack>
        <VRule />
        <Stack $gap={8}><Push $w={62} type="button">B-LMT F3</Push><Push $w={62} type="button">S-LMT F5</Push></Stack>
        <Gap $wide />
        <Stack $gap={8}><Push $w={62} type="button">B-MKT F4</Push><Push $w={62} type="button">S-MKT F6</Push></Stack>
        <VRule />
        <Stack $gap={8}><Push $w={78} type="button" disabled>Modify F10</Push><Push $w={78} type="button" disabled>Cancel F9</Push></Stack>
        <VRule />
        <Stack $gap={8}>
          <Line $mt={1}><Label htmlFor="template" $ml={3} $w={49}>Template:</Label><Choice id="template" value="" w={123} /></Line>
          <Line $gap={8}><Push $w={67} type="button">Save</Push><Push $w={68} type="button" disabled>Delete</Push></Line>
        </Stack>
      </Line>
    </Form>
  </Panel>
);

const QtyHead = styled.label`
  width: 72px;
  height: 17px;
`;

const Gap = styled.span<{ $wide?: boolean }>`
  flex: none;
  width: ${(p) => (p.$wide ? "8px" : "7px")};
`;

const ActiveOrders = () => (
  <Panel $h={115}>
    <Title text="Active Orders.All:0" />
    <Body>
      <Well>
        <HeaderGrid filler cols={[["Account", 52], ["Order #", 48], ["State", 37], ["Avg.Price", 58], ["Side", 33], ["Qty", 28], ["Symbol", 46], ["Price", 36], ["Last.Cmd", 57]]} />
      </Well>
      <SideStrip $w={63}>
        <Grip />
        <StripButton type="button" disabled>Cancel</StripButton>
        <StripButton type="button" disabled>Cancel All</StripButton>
        <StripRule />
        <StripEnd $gap={20}><EndMark /></StripEnd>
      </SideStrip>
    </Body>
  </Panel>
);

const FilledOrders = () => (
  <Panel $grow>
    <Title text="Filled Orders.All:0" />
    <Body>
      <Well>
        <HeaderGrid filler cols={[["Account", 52], ["Order #", 48], ["State", 37], ["Side", 32], ["Qty", 29], ["Symbol", 46], ["Avg.Price", 58]]} />
      </Well>
      <SideStrip $w={62} $top={3}>
        <Grip />
        <StripButton type="button" disabled>
          <Ic><path d="M1 11c1-5 4-8 7-8l1.500 1.500L13 4l2 3c0 3-2 5-3.500 6L10 10.500 7 11l-3 3.500c-2 0-3-1.500-3-3.500z" fill="#a2a2a2" stroke="#858585" /><path d="M5 10l3-5M9 10l3-4.500" stroke="#d0d0d0" /></Ic>
          Find
        </StripButton>
        <StripRule />
        <StripButton type="button" $boxed>Cancelled</StripButton>
        <StripButton type="button" $boxed>Rejected</StripButton>
        <StripEnd $gap={5}><EndMark /></StripEnd>
      </SideStrip>
    </Body>
  </Panel>
);

const quoteCols: Col[] = [
  ["Symbol", 62], ["Last", 54], ["Chg", 48], ["BidSize", 47], ["Bid", 54], ["Ask", 54], ["AskSize", 50], ["High", 54], ["Low", 54],
  ["Chg%", 44], ["LastVol", 47], ["TotalVol", 51], ["Open", 54], ["Settle", 54], ["Updated", 54], ["Base Contract"],
];

const G = "#008000";
const R = "#ff0000";
const GREY = "#d3d3d3";

const quotes: { bg: string; c: string; v: string[]; flash?: boolean }[] = [
  { bg: GREY, c: G, v: ["ESU5", "2087.25", "6.75", "260", "2087.25", "2087.50", "832", "2087.50", "2073.75", "0.32%", "1", "906,507", "2079.25", "2080.50", "12:14:59", "ES"] },
  { bg: "#b9b9ff", c: "#000", v: ["RLM-MU5", "1209.8", "8.1", "12", "1209.7", "1209.9", "15", "1210.0", "1195.9", "0.67%", "1", "60,160", "1199.8", "1201.7", "12:14:57", "RLM-M"] },
  { bg: GREY, c: G, v: ["YMU5", "17430", "61", "15", "17430", "17431", "12", "17431", "17321", "0.35%", "1", "84,471", "17356", "17369", "12:14:57", "YM"] },
  { bg: "#fff", c: "#000", v: ["ZBU5", "158 04", "0 00", "111", "158 04", "158 05", "263", "158 21", "157 12", "0%", "6", "163,850", "157 29", "158 04", "12:14:57", "ZB"] },
  { bg: GREY, c: R, v: ["ZNU5", "127 11.0", "-0 00.5", "984", "127 10.5", "127 11.0", "922", "127 22.0", "127 06.0", "-0.01%", "1", "679,564", "127 15.0", "127 11.5", "12:14:55", "ZN"] },
  { bg: "#fff", c: R, flash: true, v: ["GCLU5", "42.37", "-0.13", "24", "42.36", "42.37", "1", "42.96", "41.35", "-0.31%", "1", "281,573", "42.23", "42.50", "12:14:59", "GCL"] },
];

const QuoteBody = styled.div`
  display: flex;
  flex: 1;
`;

const QuoteMain = styled.div`
  flex: 1;
  min-width: 0;
`;

const TableGap = styled.tbody`
  &::before { content: ""; display: block; height: 2px; }
`;

const Quotes = () => (
  <Panel $h={198}>
    <Title text="Quotes" />
    <ToolBar>
      <Grip $vertical />
      {Object.entries(quoteTools).map(([name, icon]) => (
        <React.Fragment key={name}>
          {["Move up", "Settings", "Add alert", "Mobile", "Customize"].includes(name) && <ToolRule />}
          <Tool type="button" aria-label={name}>{icon}</Tool>
        </React.Fragment>
      ))}
      <Caret />
      <ToolEnd $push type="button" aria-label="More"><DownMark /></ToolEnd>
    </ToolBar>
    <Well>
      <QuoteBody>
        <QuoteMain>
          <Grid>
            <colgroup>{quoteCols.map(([n, w]) => <col key={n} width={w} />)}</colgroup>
            <thead>
              <tr>{quoteCols.map(([n], i) => <Th key={n} $right={i > 0 && i < 15}>{n}</Th>)}</tr>
            </thead>
            <TableGap>
              {quotes.map((q) => (
                <QuoteRow key={q.v[0]} $bg={q.bg}>
                  {q.v.map((v, i) => (
                    <Td key={i} $left={i === 0 || i === 15} $color={i === 2 || i === 9 ? q.c : undefined} $flash={q.flash && (i === 4 || i === 5)}>{v}</Td>
                  ))}
                </QuoteRow>
              ))}
            </TableGap>
          </Grid>
        </QuoteMain>
        <VScroll before={15} size={80} />
      </QuoteBody>
      <HScroll size={341} after={463} corner />
    </Well>
  </Panel>
);

/* Each candle: wick top, body top, body bottom, wick bottom (thirds of a pixel below the pane top), colour. */
const candles = `522 531 547 547 g|531 533 541 549 r|541 541 596 611 r|541 547 590 597 g|516 523 547 547 g|484 484 523 523 g|478 493 517 523 r|502 517 517 517 d|493 499 523 523 g|493 493 509 515 r|517 517 556 556 r|541 547 556 581 g|556 556 566 581 r|532 532 556 563 g|510 532 532 541 d|454 460 532 532 g|436 436 460 470 g|427 436 436 452 d|388 388 427 437 g|373 388 412 428 r|420 421 428 443 r|428 428 451 461 r|428 428 451 461 g|427 427 436 436 g|421 421 436 436 g|421 421 427 427 r|406 412 427 427 g|412 412 427 443 r|412 412 436 436 g|382 388 403 403 g|367 373 388 395 r|382 388 397 397 r|397 397 412 412 r|412 412 427 437 r|424 427 445 470 r|421 421 445 445 g|391 403 421 428 g|364 364 397 403 g|310 349 373 373 g|325 325 340 340 g|325 325 364 380 r|334 340 355 355 g|325 325 340 346 g|318 325 325 331 d|310 310 325 341 g|277 277 316 316 g|253 277 277 277 d|262 277 286 286 r|277 292 316 332 r|295 316 325 325 r|286 301 325 325 g|292 301 316 316 r|325 325 334 340 r|334 334 340 340 r|334 340 340 347 d|325 349 349 364 d|349 349 349 365 d|334 349 379 389 r|349 349 373 379 g|325 325 349 349 g|301 316 340 356 r|340 340 364 389 r|349 355 364 364 g|355 355 379 379 r|349 355 388 388 g|334 340 355 355 g|318 325 349 364 g|268 277 325 325 g|253 253 286 286 g|223 244 253 253 g|238 238 244 269 g|238 238 253 253 r|223 229 253 253 g|213 220 220 230 d|190 229 229 238 d|222 229 238 244 r|229 229 238 244 r|190 190 229 236 g|190 190 205 212 r`
  .split("|")
  .map((s) => s.split(" "));

const volume = [147,156,123,132,123,117,105,147,138,147,141,132,144,150,132,90,156,132,93,87,111,138,144,156,138,153,147,126,129,114,102,150,126,138,114,147,117,147,27,141,126,153,108,129,126,99,93,99,129,111,132,120,138,153,132,99,144,129,150,141,114,78,150,147,126,129,135,102,126,87,114,141,144,141,84,132,156,123,120];
const cci = [254,270,331,307,260,229,256,272,273,279,326,340,357,332,310,254,235,248,247,263,281,295,294,291,291,299,279,318,286,207,233,265,300,337,365,334,299,260,235,243,276,274,272,272,271,242,230,259,300,309,301,316,360,363,359,355,355,367,347,298,289,353,328,358,333,279,270,220,223,241,264,272,272,270,270,288,296,237,251];
const trix = [600,597,600,600,597,591,588,579,576,570,567,567,567,567,567,564,558,549,537,528,516,510,504,498,492,489,486,483,483,480,480,477,477,480,483,486,492,492,492,489,489,486,483,480,477,471,465,459,456,456,456,459,462,465,471,480,486,498,507,513,519,528,534,540,549,555,558,558,555,549,540,534,525,516,507,501,495,489,486];
const sma: [number, number][] = [[100,559],[160,565],[220,564],[310,560],[394,553],[484,546],[541,537],[601,521],[660,507],[718,498],[748,489],[810,478],[865,472],[925,463],[955,456],[1072,426],[1162,418],[1249,408],[1309,399],[1390,386],[1486,361],[1573,350],[1650,338],[1750,326],[1900,326],[1990,333],[2074,339],[2190,325],[2340,297],[2398,280]];

const barX = (i: number) => Math.round(603.2 + i * 9.82);
const priceY = (v: number) => 415 + Math.round(v / 3);
const lowY = (v: number) => 635 + Math.round(v / 3);

const times = ["11:01", "11:06", "11:11", "11:16", "11:21", "11:26", "11:31", "11:36", "", "11:46", "11:51", "11:56", "12:01", "12:06", "12:11"];
const panes: [number, number[], number][] = [
  [466, [468, 488, 510, 531, 552, 573, 595, 616], 636],
  [641, [641, 653, 665, 678], 690],
  [694, [694, 708, 723, 752], 766],
  [770, [771, 784, 799, 814, 843], 846],
];
const axis: [string, number][] = [
  ["1209.6", 490], ["1208.0", 532], ["1207.2", 553], ["1206.4", 575], ["1205.6", 596], ["1204.8", 617],
  ["300.0", 654], ["200.0", 666], ["100.0", 679],
  ["200.0", 709], ["100.0", 724], ["0.0", 738], ["-100.0", 753],
  ["0.0000600", 786], ["0.0000200", 815], ["0.0000000", 830],
];
const tags: [string, number, string][] = [
  ["1209.8", 478, "#000"], ["1208.9", 503, "#0000ff"], ["127", 670, "#008000"], ["128.9", 714, "#9a0cd4"], ["0.0000439", 791, "#8b0a0e"],
];
const ink: Record<string, string> = { g: "#128512", r: "#ff1010", d: "#000" };

const Chart = () => (
  <ChartSvg viewBox="600 465 837 392" role="img" aria-label="Price chart with volume, commodity channel index and TRIX studies">
    <g fill="#d3d3d3" shapeRendering="crispEdges">
      {panes.map(([top, rows, end]) => (
        <React.Fragment key={top}>
          {times.map((_, i) => <rect key={i} x={barX(5 + i * 5)} y={top} width="1" height={end - top} />)}
          <rect x="603" y={top} width="1" height={end - top} />
          <rect x="1379" y={top} width="1" height={end - top} />
          {rows.map((y) => <rect key={y} x="603" y={y} width="776" height="1" />)}
        </React.Fragment>
      ))}
      <rect x="603" y="636" width="776" height="1" />
      {[637, 690, 766].map((y) => (
        <React.Fragment key={y}>
          <rect x="601" y={y} width="834" height="1" fill="#6e6e6e" />
          <rect x="601" y={y + 2} width="834" height="1" fill="#c8c8c8" />
        </React.Fragment>
      ))}
      <rect x="1382" y="843" width="54" height="1" />
    </g>
    <g stroke="#555" strokeDasharray="4 1 1 1" shapeRendering="crispEdges">
      <path d="M603 737.5h776M603 828.5h776" />
    </g>
    <g shapeRendering="crispEdges">
      {volume.map((v, i) => <rect key={i} x={i ? barX(i) - 2 : 603} y={lowY(v)} width={i ? 5 : 3} height={690 - lowY(v)} fill="#008000" />)}
      {trix.map((v, i) => {
        const y = lowY(v);
        return <rect key={i} x={i ? barX(i) - 2 : 603} y={Math.min(y, 829)} width={i ? 5 : 3} height={Math.max(1, Math.abs(829 - y))} fill="#8b0a0e" />;
      })}
      <rect x="603" y="483" width="776" height="1" fill="#000" />
      {candles.map(([h, t, b, l, c], i) => {
        const x = barX(i);
        const top = priceY(+t);
        const bottom = priceY(+b);
        return (
          <g key={i}>
            <rect x={x} y={priceY(+h)} width="1" height={priceY(+l) - priceY(+h) + 1} />
            {c === "d" ? (
              <rect x={x - 3} y={top} width="7" height="1" />
            ) : (
              <rect x={x - 2.5} y={top + 0.5} width="6" height={Math.max(1, bottom - top - 1)} fill={ink[c]} stroke="#000" />
            )}
          </g>
        );
      })}
      <rect x="600" y="515" width="3" height="100" fill="#fff" />
    </g>
    <polyline fill="none" stroke="#2a2aee" strokeWidth="1.2" points={sma.map(([x, y]) => `${(570 + x / 3).toFixed(1)},${(415 + y / 3 + 0.5).toFixed(1)}`).join(" ")} />
    <polyline fill="none" stroke="#a02ad8" strokeWidth="1.2" points={cci.map((v, i) => `${barX(i) + 0.5},${(635 + v / 3 + 0.5).toFixed(1)}`).join(" ")} />
    <g fill="#8a8a8a">
      <text x="608" y="653">Volume</text>
      <text x="608" y="706">Commodity Channel Index</text>
      <text x="608" y="783">TRIX</text>
    </g>
    {axis.map(([t, y]) => <text key={t + y} x="1382" y={y + 3}>{t}</text>)}
    {tags.map(([t, y, c]) => (
      <g key={t}>
        <rect x="1379" y={y} width="55" height={12} fill={c} />
        <text x="1381" y={y + 9} fill="#fff">{t}</text>
      </g>
    ))}
    {times.map((t, i) => t && <text key={t} x={barX(5 + i * 5)} y="855" textAnchor="middle">{t}</text>)}
    <rect x="1045" y="467" width="1" height="379" fill="#ff0000" shapeRendering="crispEdges" />
    <rect x="1013" y="845" width="65" height="11" fill="#ff0000" />
    <text x="1015" y="854" fill="#fff">Aug, 14 11:41</text>
  </ChartSvg>
);

const dataRows: [string, string, string, string, string?, string?][] = [
  ["High", "1208.9", "Low", "1208.4"],
  ["Open", "1208.4", "Close", "1208.9"],
  ["SMA", "1207.66", "Vol", "183", "#0000e0", "#008000"],
  ["CCI", "150.96", "TRIX", "0.00", "#9a0cd4", "#8b0a0e"],
];

const ChartPanel = () => (
  <Panel $grow>
    <Title active text="RLM-MU5: 1 minute (Chart Default) : 1 second" />
    <ToolBar>
      <Grip $vertical />
      <Tool type="button" aria-label="Pin" $w={28}>{chartIcons.pin}</Tool>
      <IntervalWrap $w={82}>
        <Interval aria-label="Interval" defaultValue="1 minute"><option>1 minute</option></Interval>
        <Caret />
      </IntervalWrap>
      <Tool type="button" aria-label="Bar style" $w={21}>{chartIcons.candles}</Tool>
      <Caret />
      <Tool type="button" aria-label="Zoom"><Lens /></Tool>
      <Caret />
      <Tool type="button" aria-label="Zoom in"><Lens sign="plus" /></Tool>
      <Tool type="button" aria-label="Zoom out"><Lens sign="minus" /></Tool>
      <Tool type="button" aria-label="Lock" $on>{chartIcons.lock}</Tool>
      <Tool type="button" aria-label="Refresh">{chartIcons.refresh}</Tool>
      <ToolRule />
      <Tool type="button" aria-label="Magnet" $on>{chartIcons.magnet}</Tool>
      <ToolRule />
      <Tool type="button" aria-label="Theme" $w={20}>{chartIcons.theme}</Tool>
      <Caret />
      <Tool type="button" aria-label="Group" $w={27}>{chartIcons.tree}</Tool>
      <Tool type="button" aria-label="Profile" $w={21}>{chartIcons.profile}</Tool>
      <Tool type="button" aria-label="Volume bars" $on>{chartIcons.bars}</Tool>
      <ToolRule />
      <Tool type="button" aria-label="Add study">{chartIcons.toolsPlus}</Tool>
      <Tool type="button" aria-label="Alerts" $w={20}><Ic><Bell /></Ic></Tool>
      <Caret />
      <ToolSpace />
      <ToolRule />
      <Tool type="button" aria-label="Mobile"><Phone /></Tool>
      <Tool type="button" aria-label="Mouse">{chartIcons.mouse}</Tool>
      <ToolRule />
      <Tool type="button" aria-label="Pointer"><Ic><Pointer /></Ic></Tool>
      <Tool type="button" aria-label="Cross pointer" $on>
        <Ic><path d="M7.500 0v16M0 7.500h16" stroke="#ff5050" strokeWidth="1.200" /><Pointer x={1} /></Ic>
      </Tool>
      <Tool type="button" aria-label="Crosshair"><RedCross /></Tool>
      <Tool type="button" aria-label="Crosshair with center"><RedCross dot="center" /></Tool>
      <Tool type="button" aria-label="Crosshair with point"><RedCross cx={7} dot="right" /></Tool>
      <ToolEnd type="button" aria-label="More"><DownMark /></ToolEnd>
    </ToolBar>
    <ChartRow>
      <Palette>
        <PaletteGrip />
        {palette.map(([name, icon], i) => <PaletteTool key={name} type="button" aria-label={name} $on={i === 0}>{icon}</PaletteTool>)}
        <PaletteEnd><EndMark /></PaletteEnd>
      </Palette>
      <ChartArea>
        <Chart />
        <HScroll before={281} size={518} />
        <DataWindow>
          <DataTable>
            <colgroup><col width={26} /><col width={40} /><col width={31} /><col /></colgroup>
            <tbody>
              {dataRows.map(([a, b, c, d, c1, c2]) => (
                <tr key={a}><DataCell $c={c1}>{a}</DataCell><DataCell $c={c1}>{b}</DataCell><DataCell $c={c2}>{c}</DataCell><DataCell $c={c2}>{d}</DataCell></tr>
              ))}
            </tbody>
          </DataTable>
        </DataWindow>
        <Collapse type="button" aria-label="Collapse axis">
          <Ic w={17} h={9}><g fill="#4a64a0"><path d="M5.500 0h2.500L4 4.500 8 9H5.500l-4-4.500z" /><path d="M10 0h2L8.500 4.500 12 9h-2L6.500 4.500z" /><path d="M14 0h2l-3.500 4.500L16 9h-2l-3.500-4.500z" /></g></Ic>
        </Collapse>
      </ChartArea>
    </ChartRow>
  </Panel>
);

const ToolSpace = styled.span`
  width: 2px;
`;

const PaletteTool = styled(Tool)`
  width: 22px;
  height: 23px;
`;

export default function App() {
  return (
    <Shell>
      <GlobalStyle />
      <TitleBar>
        <AppName>
          <Ic>
            <rect width="16" height="16" fill="#fff" />
            <circle cx="8" cy="8" r="7" fill="none" stroke="#d8403f" strokeWidth="1.400" />
            <path d="M3.500 5.500h9M4 10.500h5" stroke="#e07a78" />
            <text x="8" y="10" textAnchor="middle" fontFamily="Liberation Sans" fontSize="5" fontWeight="bold" fill="#c9302f">ZEN</text>
          </Ic>
          Global Zen Trader
        </AppName>
      </TitleBar>
      <MenuBar>
        {["File", "Trading", "Charts & Quotes", "Tools", "Reports", "Research & Ideas", "Help", "Open a Live Account"].map((m, i) => (
          <MenuItem key={m} type="button" $gap={i === 7}>{m}</MenuItem>
        ))}
        <AccountLabel>Account:</AccountLabel>
      </MenuBar>
      <TopRow>
        <Positions />
        <VSplit />
        <AccountSummary />
      </TopRow>
      <HSplit />
      <MainRow>
        <Column>
          <OrderEntry />
          <HSplit />
          <ActiveOrders />
          <HSplit />
          <FilledOrders />
        </Column>
        <VSplit />
        <Column>
          <Quotes />
          <HSplit />
          <ChartPanel />
        </Column>
      </MainRow>
      <StatusBar>
        <Ic w={12} h={12}><circle cx="6" cy="6" r="5.500" fill="#10e810" stroke="#0a5a0a" /><circle cx="4.500" cy="4" r="1.300" fill="#d8ffd8" /></Ic>
        <Connected>Connected</Connected>
        <StatusText $first>Strategies: client-side</StatusText>
        <StatusText $rule>Workspace: Default</StatusText>
        <StatusText $rule>12:14:59 PM</StatusText>
      </StatusBar>
    </Shell>
  );
}
